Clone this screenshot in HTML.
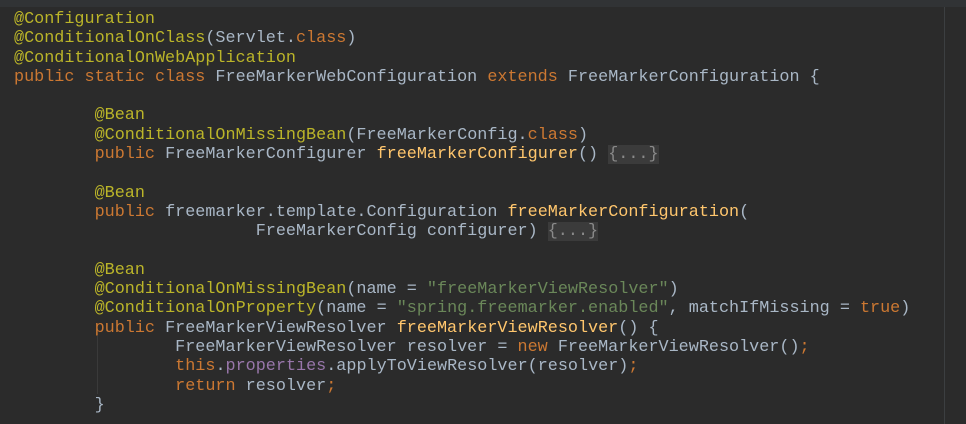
<!DOCTYPE html>
<html><head><style>
html,body{margin:0;padding:0;background:#2b2b2b;width:966px;height:424px;overflow:hidden}
.top{position:absolute;left:0;top:0;width:966px;height:7px;background:#313335}
.rm{position:absolute;left:944px;top:7px;width:1px;height:417px;background:#3c3f41}
.ig{position:absolute;left:97px;top:336px;width:1px;height:58px;background:#3a3a3a}
pre{position:absolute;left:14px;top:10px;margin:0;font-family:"Liberation Mono",monospace;font-size:16.8px;line-height:19.3px;color:#a9b7c6;letter-spacing:0px}
.a{color:#bbb529}.k{color:#cc7832}.m{color:#ffc66d}.s{color:#6a8759}.p{color:#9876aa}
.f{background:#3b3b3b;color:#8a8a8a}
</style></head><body>
<div class="top"></div><div class="rm"></div><div class="ig"></div>
<pre><span class="a">@Configuration</span>
<span class="a">@ConditionalOnClass</span>(Servlet.<span class="k">class</span>)
<span class="a">@ConditionalOnWebApplication</span>
<span class="k">public static class </span>FreeMarkerWebConfiguration <span class="k">extends </span>FreeMarkerConfiguration {

        <span class="a">@Bean</span>
        <span class="a">@ConditionalOnMissingBean</span>(FreeMarkerConfig.<span class="k">class</span>)
        <span class="k">public </span>FreeMarkerConfigurer <span class="m">freeMarkerConfigurer</span>() <span class="f">{...}</span>

        <span class="a">@Bean</span>
        <span class="k">public </span>freemarker.template.Configuration <span class="m">freeMarkerConfiguration</span>(
                        FreeMarkerConfig configurer) <span class="f">{...}</span>

        <span class="a">@Bean</span>
        <span class="a">@ConditionalOnMissingBean</span>(name = <span class="s">"freeMarkerViewResolver"</span>)
        <span class="a">@ConditionalOnProperty</span>(name = <span class="s">"spring.freemarker.enabled"</span>, matchIfMissing = <span class="k">true</span>)
        <span class="k">public </span>FreeMarkerViewResolver <span class="m">freeMarkerViewResolver</span>() {
                FreeMarkerViewResolver resolver = <span class="k">new </span>FreeMarkerViewResolver()<span class="k">;</span>
                <span class="k">this</span>.<span class="p">properties</span>.applyToViewResolver(resolver)<span class="k">;</span>
                <span class="k">return </span>resolver<span class="k">;</span>
        }
</pre>
</body></html>
